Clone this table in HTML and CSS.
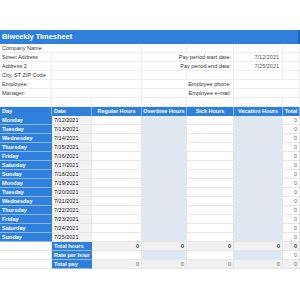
FILE: index.html
```html
<!DOCTYPE html>
<html>
<head>
<meta charset="utf-8">
<link rel="stylesheet" href="styles.css">
</head>
<body>
<div class="sheet">
  <div class="title">Biweekly Timesheet</div>
  <div class="grid info">
    <div class="c s3">Company Name</div><div class="c"></div><div class="c"></div><div class="c"></div><div class="c"></div>
    <div class="c">Street Address</div><div class="c s2"></div><div class="c s2 r">Pay period start date:</div><div class="c r val">7/12/2021</div><div class="c"></div>
    <div class="c">Address 2</div><div class="c s2"></div><div class="c s2 r">Pay period end date:</div><div class="c r val">7/25/2021</div><div class="c"></div>
    <div class="c">City, ST ZIP Code</div><div class="c s2"></div><div class="c"></div><div class="c"></div><div class="c"></div><div class="c"></div>
    <div class="c">Employee:</div><div class="c s2"></div><div class="c s2 r">Employee phone:</div><div class="c s2"></div>
    <div class="c">Manager:</div><div class="c s2"></div><div class="c s2 r">Employee e-mail:</div><div class="c s2"></div>
    <div class="c"></div><div class="c"></div><div class="c"></div><div class="c"></div><div class="c"></div><div class="c"></div><div class="c"></div>
  </div>
  <div class="grid data">
    <div class="c hd">Day</div><div class="c hd">Date</div><div class="c hd ctr">Regular Hours</div><div class="c hd ctr">Overtime Hours</div><div class="c hd ctr">Sick Hours</div><div class="c hd ctr">Vacation Hours</div><div class="c hd ctr">Total</div>

    <div class="c day">Monday</div><div class="c date">7/12/2021</div><div class="c"></div><div class="c alt"></div><div class="c"></div><div class="c alt"></div><div class="c r num">0</div>
    <div class="c day">Tuesday</div><div class="c date">7/13/2021</div><div class="c"></div><div class="c alt"></div><div class="c"></div><div class="c alt"></div><div class="c r num">0</div>
    <div class="c day">Wednesday</div><div class="c date">7/14/2021</div><div class="c"></div><div class="c alt"></div><div class="c"></div><div class="c alt"></div><div class="c r num">0</div>
    <div class="c day">Thursday</div><div class="c date">7/15/2021</div><div class="c"></div><div class="c alt"></div><div class="c"></div><div class="c alt"></div><div class="c r num">0</div>
    <div class="c day">Friday</div><div class="c date">7/16/2021</div><div class="c"></div><div class="c alt"></div><div class="c"></div><div class="c alt"></div><div class="c r num">0</div>
    <div class="c day">Saturday</div><div class="c date">7/17/2021</div><div class="c"></div><div class="c alt"></div><div class="c"></div><div class="c alt"></div><div class="c r num">0</div>
    <div class="c day">Sunday</div><div class="c date">7/18/2021</div><div class="c"></div><div class="c alt"></div><div class="c"></div><div class="c alt"></div><div class="c r num">0</div>
    <div class="c day">Monday</div><div class="c date">7/19/2021</div><div class="c"></div><div class="c alt"></div><div class="c"></div><div class="c alt"></div><div class="c r num">0</div>
    <div class="c day">Tuesday</div><div class="c date">7/20/2021</div><div class="c"></div><div class="c alt"></div><div class="c"></div><div class="c alt"></div><div class="c r num">0</div>
    <div class="c day">Wednesday</div><div class="c date">7/21/2021</div><div class="c"></div><div class="c alt"></div><div class="c"></div><div class="c alt"></div><div class="c r num">0</div>
    <div class="c day">Thursday</div><div class="c date">7/22/2021</div><div class="c"></div><div class="c alt"></div><div class="c"></div><div class="c alt"></div><div class="c r num">0</div>
    <div class="c day">Friday</div><div class="c date">7/23/2021</div><div class="c"></div><div class="c alt"></div><div class="c"></div><div class="c alt"></div><div class="c r num">0</div>
    <div class="c day">Saturday</div><div class="c date">7/24/2021</div><div class="c"></div><div class="c alt"></div><div class="c"></div><div class="c alt"></div><div class="c r num">0</div>
    <div class="c day">Sunday</div><div class="c date">7/25/2021</div><div class="c"></div><div class="c alt"></div><div class="c"></div><div class="c alt"></div><div class="c r num">0</div>

    <div class="c"></div><div class="c day">Total hours</div><div class="c sum r b">0</div><div class="c sum r b">0</div><div class="c sum r b">0</div><div class="c sum r b">0</div><div class="c sum r b">0</div>
    <div class="c"></div><div class="c day">Rate per hour</div><div class="c"></div><div class="c alt"></div><div class="c"></div><div class="c alt"></div><div class="c r num">0</div>
    <div class="c"></div><div class="c day">Total pay</div><div class="c sum r num">0</div><div class="c sum r num">0</div><div class="c sum r num">0</div><div class="c sum r num">0</div><div class="c sum r num">0</div>
  </div>
</div>
</body>
</html>
```

FILE: styles.css
```css
html, body {
  margin: 0;
  padding: 0;
  background: #ffffff;
}
body {
  font-family: "Liberation Sans", Arial, sans-serif;
  font-size: 5.5px;
  color: #333333;
}
.sheet {
  padding-top: 30px;
  width: 300px;
}
.title {
  height: 14px;
  box-sizing: border-box;
  background: #2f80dd;
  border-right: 2px solid #1f66bd;
  color: #ffffff;
  font-weight: bold;
  font-size: 7.4px;
  line-height: 14px;
  padding-left: 2px;
}
.grid {
  display: grid;
  grid-template-columns: 52px 40px 50px 45px 47px 49px 17px;
  grid-auto-rows: 9px;
}
.c {
  box-sizing: border-box;
  border-right: 1px solid #e6e6e6;
  border-bottom: 1px solid #e6e6e6;
  padding: 0 1px 0 2px;
  line-height: 8px;
  white-space: nowrap;
  overflow: hidden;
}
.info .c {
  border-color: #ededed;
}
.s2 { grid-column: span 2; }
.s3 { grid-column: span 3; }
.r { text-align: right; padding-right: 2px; }
.info .val { padding-right: 3px; color: #555555; }
.ctr { text-align: center; padding: 0; }
.hd {
  background: #2f80dd;
  color: #ffffff;
  font-weight: bold;
  border-right-color: #8cb8ec;
  border-bottom-color: #2f80dd;
}
.day {
  background: #2f80dd;
  color: #ffffff;
  font-weight: bold;
  border-right-color: #2f80dd;
  border-bottom-color: #8cb8ec;
}
.date {
  background: #f2f2f2;
  color: #222222;
}
.alt {
  background: #dfe7f1;
}
.num {
  color: #666666;
}
.sum {
  background: #f1f1f1;
}
.b {
  font-weight: bold;
  color: #444444;
}
```
